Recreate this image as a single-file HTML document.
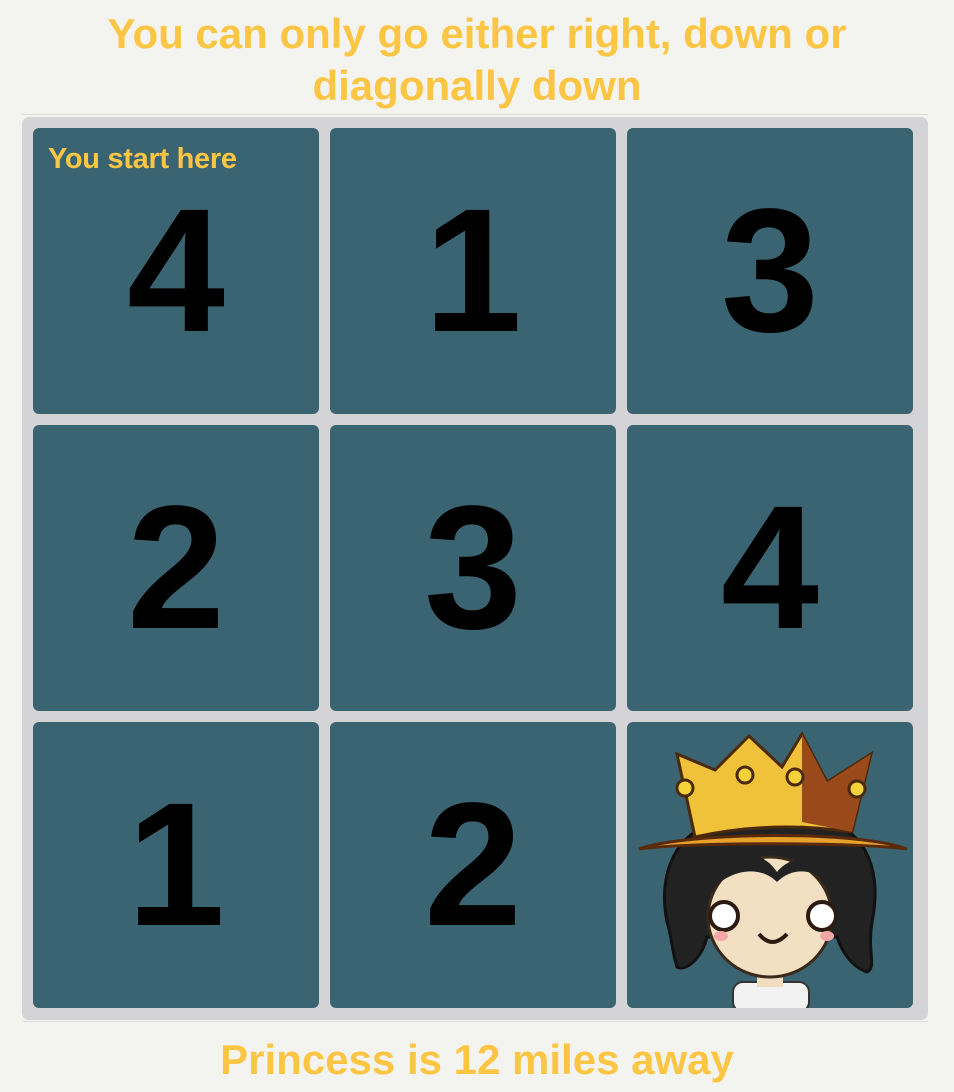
<!DOCTYPE html>
<html><head><style>
body{margin:0;background:#f3f4ef;width:954px;height:1092px;overflow:hidden;font-family:"Liberation Sans",Arial,sans-serif;position:relative}
.t{position:absolute;left:0;width:954px;text-align:center;color:#fcc544;font-weight:bold;font-size:42px;line-height:52px}
.hr{position:absolute;left:22px;width:906px;height:1px;background:#dcdcdc}
.box{position:absolute;left:22px;top:117px;width:906px;height:903px;background:#d4d4d7;border-radius:7px}
.c{position:absolute;width:286px;height:286px;background:#3b6472;border-radius:6px;overflow:hidden;text-align:center;font-weight:bold;font-size:176px;line-height:286px;color:#000}
.s{position:absolute;left:15px;top:14px;font-size:29px;line-height:34px;color:#fcc544;letter-spacing:-0.3px}
</style></head><body>
<div class="t" style="top:8px">You can only go either right, down or<br>diagonally down</div>
<div class="hr" style="top:114px"></div>
<div class="box"></div>
<div class="c" style="left:33px;top:128px"><div class="s">You start here</div>4</div>
<div class="c" style="left:330px;top:128px">1</div>
<div class="c" style="left:627px;top:128px">3</div>
<div class="c" style="left:33px;top:425px">2</div>
<div class="c" style="left:330px;top:425px">3</div>
<div class="c" style="left:627px;top:425px">4</div>
<div class="c" style="left:33px;top:722px">1</div>
<div class="c" style="left:330px;top:722px">2</div>
<div class="c" style="left:627px;top:722px">
<svg width="286" height="286" viewBox="0 0 286 286" style="position:absolute;left:0;top:0">
<path d="M40 200 C30 150 50 110 90 100 L200 100 C240 110 255 150 245 200 C240 230 250 245 240 250 C225 245 215 230 210 215 L80 215 C75 235 60 250 50 245 C45 230 45 215 40 200Z" fill="#222" stroke="#111" stroke-width="3"/>
<rect x="106" y="260" width="76" height="30" rx="10" fill="#f2f2f2" stroke="#333" stroke-width="2"/>
<rect x="130" y="240" width="26" height="25" fill="#f0ddc0"/>
<ellipse cx="143" cy="195" rx="62" ry="60" fill="#f3dfc1" stroke="#3a2a1a" stroke-width="3"/>
<path d="M80 175 C90 130 130 120 150 150 C170 125 205 140 210 175 C200 150 170 140 150 160 C130 140 95 150 80 175Z" fill="#222"/>
<circle cx="97" cy="194" r="14" fill="#fff" stroke="#2a1a10" stroke-width="4"/>
<circle cx="195" cy="194" r="14" fill="#fff" stroke="#2a1a10" stroke-width="4"/>
<ellipse cx="94" cy="214" rx="7" ry="5" fill="#f3a6a6"/>
<ellipse cx="200" cy="214" rx="7" ry="5" fill="#f3a6a6"/>
<path d="M132 212 Q145 228 160 212" stroke="#2a1a10" stroke-width="4" fill="none"/>
<path d="M12 127 C60 110 230 108 280 127 C230 120 60 120 12 127Z" fill="#e7a22e" stroke="#5a2a0a" stroke-width="3"/>
<path d="M68 115 L50 32 L88 48 L122 14 L155 45 L175 12 L200 60 L244 32 L225 110 Q145 98 68 115Z" fill="#f0c23a" stroke="#4a2a0a" stroke-width="3"/>
<path d="M175 12 L200 60 L244 32 L225 110 L175 100Z" fill="#9a4a1a"/>
<circle cx="58" cy="66" r="8" fill="#f6d23a" stroke="#4a2a0a" stroke-width="3"/>
<circle cx="118" cy="53" r="8" fill="#f6d23a" stroke="#4a2a0a" stroke-width="3"/>
<circle cx="168" cy="55" r="8" fill="#f6d23a" stroke="#4a2a0a" stroke-width="3"/>
<circle cx="230" cy="67" r="8" fill="#f6d23a" stroke="#4a2a0a" stroke-width="3"/>
</svg></div>
<div class="hr" style="top:1021px"></div>
<div class="t" style="top:1034px">Princess is 12 miles away</div>
</body></html>
